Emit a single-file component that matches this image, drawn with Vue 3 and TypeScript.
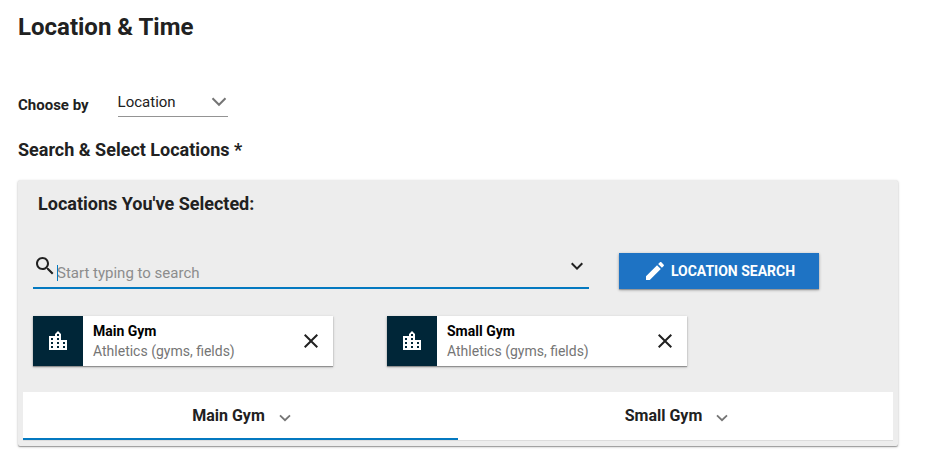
<script setup lang="ts">
import { ref } from 'vue'

interface Place {
  id: number
  name: string
  category: string
}

const modes = ['Location', 'Time']
const mode = ref('Location')
const query = ref('')
const activeId = ref(1)
const places = ref<Place[]>([
  { id: 1, name: 'Main Gym', category: 'Athletics (gyms, fields)' },
  { id: 2, name: 'Small Gym', category: 'Athletics (gyms, fields)' },
])

function remove(id: number) {
  places.value = places.value.filter((p) => p.id !== id)
}
</script>

<template>
  <main class="page">
    <h1 class="title">Location &amp; Time</h1>

    <div class="choose">
      <label class="choose-label" for="mode">Choose by</label>
      <div class="select-wrap">
        <select id="mode" v-model="mode" class="select">
          <option v-for="m in modes" :key="m">{{ m }}</option>
        </select>
        <svg class="select-arrow" viewBox="0 0 16 10" aria-hidden="true">
          <path d="M1.500 1.200 8 7.800l6.500-6.600" fill="none" stroke="currentColor" stroke-width="2" />
        </svg>
      </div>
    </div>

    <h2 class="heading">Search &amp; Select Locations *</h2>

    <section class="panel">
      <h3 class="panel-title">Locations You've Selected:</h3>

      <div class="search-row">
        <div class="search">
          <svg class="icon" viewBox="0 0 24 24" aria-hidden="true">
            <path d="M15.500 14h-.79l-.28-.27C15.410 12.590 16 11.110 16 9.500 16 5.910 13.090 3 9.500 3S3 5.910 3 9.500 5.910 16 9.500 16c1.610 0 3.090-.59 4.230-1.570l.27.28v.79l5 4.990L20.490 19l-4.990-5zm-6 0C7.010 14 5 11.990 5 9.500S7.010 5 9.500 5 14 7.010 14 9.500 11.990 14 9.500 14z" />
          </svg>
          <div class="field">
            <input v-model="query" class="input" type="text" placeholder="Start typing to search" aria-label="Search locations" />
            <span v-if="!query" class="caret"></span>
          </div>
          <button class="icon-button" type="button" aria-label="Show locations">
            <svg class="icon" viewBox="0 0 24 24" aria-hidden="true">
              <path d="M16.590 8.590 12 13.170 7.410 8.590 6 10l6 6 6-6z" />
            </svg>
          </button>
        </div>
        <button class="primary" type="button">
          <svg class="icon" viewBox="0 0 24 24" aria-hidden="true">
            <path d="M3 17.250V21h3.750L17.810 9.940l-3.750-3.750L3 17.250zM20.710 7.040c.39-.39.39-1.020 0-1.410l-2.340-2.340c-.39-.39-1.020-.39-1.410 0l-1.830 1.830 3.750 3.750 1.830-1.830z" />
          </svg>
          <span>LOCATION SEARCH</span>
        </button>
      </div>

      <ul class="cards">
        <li v-for="p in places" :key="p.id" class="card">
          <div class="badge">
            <svg class="icon" viewBox="0 0 24 24" aria-hidden="true">
              <path d="M15 11V5l-3-3-3 3v2H3v14h18V11h-6zm-8 8H5v-2h2v2zm0-4H5v-2h2v2zm0-4H5V9h2v2zm6 8h-2v-2h2v2zm0-4h-2v-2h2v2zm0-4h-2V9h2v2zm0-4h-2V5h2v2zm6 12h-2v-2h2v2zm0-4h-2v-2h2v2z" />
            </svg>
          </div>
          <div class="card-text">
            <div class="card-name">{{ p.name }}</div>
            <div class="card-category">{{ p.category }}</div>
          </div>
          <button class="icon-button remove" type="button" :aria-label="`Remove ${p.name}`" @click="remove(p.id)">
            <svg class="icon" viewBox="0 0 24 24" aria-hidden="true">
              <path d="M19 6.410 17.590 5 12 10.590 6.410 5 5 6.410 10.590 12 5 17.590 6.410 19 12 13.410 17.590 19 19 17.590 13.410 12z" />
            </svg>
          </button>
        </li>
      </ul>

      <div class="tabs" role="tablist">
        <button
          v-for="p in places"
          :key="p.id"
          class="tab"
          :class="{ active: p.id === activeId }"
          type="button"
          role="tab"
          :aria-selected="p.id === activeId"
          @click="activeId = p.id"
        >
          <span>{{ p.name }}</span>
          <svg class="tab-arrow" viewBox="0 0 12 8" aria-hidden="true">
            <path d="M1 1.300 6 6.200l5-4.900" fill="none" stroke="currentColor" stroke-width="1.800" />
          </svg>
        </button>
      </div>
    </section>
  </main>
</template>

<style>
body {
  margin: 0;
  background: #fff;
}
</style>

<style scoped>
.page {
  box-sizing: border-box;
  padding: 12px 38px 8px 18px;
  font-family: Roboto, "Liberation Sans", sans-serif;
  color: #212121;
}

h1, h2, h3, ul {
  margin: 0;
  padding: 0;
  font-weight: 700;
}

button, input, select {
  font-family: inherit;
  color: inherit;
  border: 0;
  border-radius: 0;
  background: none;
  padding: 0;
  outline: none;
}

button {
  cursor: pointer;
}

.title {
  font-size: 24px;
  line-height: 30px;
}

.choose {
  display: flex;
  align-items: center;
  gap: 29px;
  margin-top: 45px;
}

.choose-label {
  font-size: 15px;
  line-height: 20px;
  font-weight: 700;
  padding-top: 6px;
}

.select-wrap {
  position: relative;
  width: 110px;
}

.select {
  display: block;
  appearance: none;
  width: 100%;
  height: 30px;
  border-bottom: 1px solid #949494;
  font-size: 15px;
}

.select-arrow {
  position: absolute;
  right: 1px;
  top: 10px;
  width: 16px;
  height: 10px;
  color: #757575;
  pointer-events: none;
}

.heading {
  margin-top: 21px;
  font-size: 18px;
  line-height: 24px;
}

.panel {
  margin-top: 18px;
  padding: 12px 5px 5px;
  background: #ededed;
  border-radius: 2px;
  box-shadow: 0 1px 3px rgba(0, 0, 0, 0.2), 0 1px 1px rgba(0, 0, 0, 0.3);
}

.panel-title {
  padding: 0 15px;
  font-size: 18px;
  line-height: 24px;
}

.icon {
  display: block;
  flex: none;
  width: 24px;
  height: 24px;
  fill: currentColor;
}

.search-row {
  display: flex;
  align-items: flex-start;
  gap: 30px;
  margin-top: 37px;
  padding: 0 74px 0 10px;
}

.search {
  display: flex;
  align-items: flex-start;
  flex: 1;
  height: 33px;
  padding-top: 1px;
  border-bottom: 2px solid #0479c0;
}

.field {
  position: relative;
  flex: 1;
}

.input {
  display: block;
  width: 100%;
  height: 20px;
  margin-top: 9px;
  font-size: 15px;
}

.input::placeholder {
  color: #8c8c8c;
  opacity: 1;
}

.caret {
  position: absolute;
  left: 0;
  top: 11px;
  width: 1px;
  height: 16px;
  background: #0479c0;
}

.primary {
  display: flex;
  align-items: center;
  justify-content: center;
  gap: 4px;
  width: 200px;
  height: 36px;
  background: #1e73c4;
  color: #fff;
  font-size: 14px;
  font-weight: 700;
  box-shadow: 0 1px 3px rgba(0, 0, 0, 0.3), 0 1px 1px rgba(0, 0, 0, 0.2);
}

.cards {
  display: flex;
  gap: 54px;
  margin-top: 27px;
  padding: 0 10px;
  list-style: none;
}

.card {
  display: flex;
  align-items: center;
  width: 300px;
  background: #fff;
  box-shadow: 0 1px 3px rgba(0, 0, 0, 0.2), 0 1px 1px rgba(0, 0, 0, 0.3);
}

.badge {
  display: flex;
  align-items: center;
  justify-content: center;
  width: 50px;
  height: 50px;
  background: #002638;
  color: #fff;
}

.card-text {
  flex: 1;
  padding-left: 10px;
  font-size: 14px;
  line-height: 20px;
}

.card-name {
  color: #000;
  font-weight: 700;
}

.card-category {
  color: #757575;
  font-weight: 400;
}

.remove {
  margin-right: 10px;
}

.tabs {
  display: flex;
  margin-top: 26px;
  border-bottom: 1px solid #dcdcdc;
  background: #fff;
}

.tab {
  display: flex;
  flex: 1;
  align-items: center;
  justify-content: center;
  gap: 14px;
  height: 48px;
  padding-left: 2px;
  border-bottom: 2px solid transparent;
  font-size: 16px;
  font-weight: 700;
}

.tab.active {
  border-bottom-color: #0479c0;
}

.tab-arrow {
  width: 12px;
  height: 8px;
  padding-top: 6px;
  color: #757575;
}
</style>
